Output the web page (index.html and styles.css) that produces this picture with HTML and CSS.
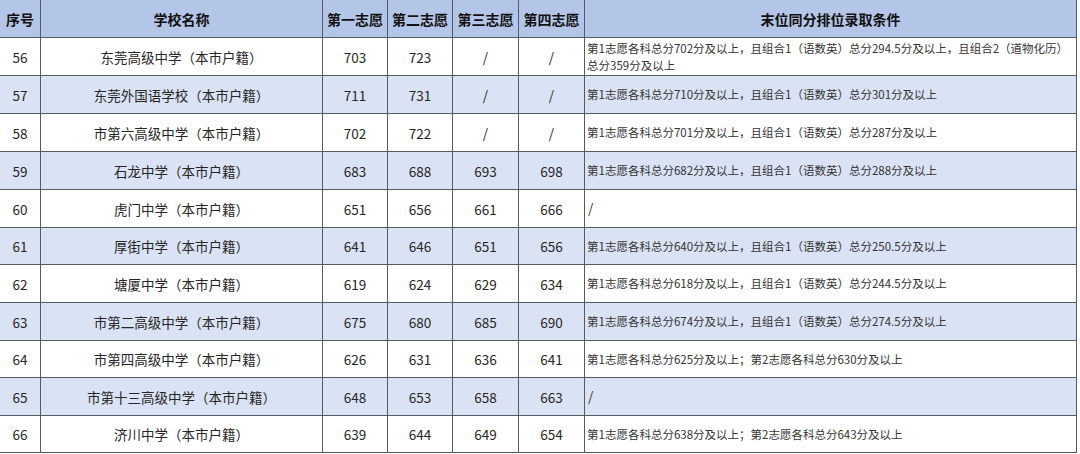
FILE: index.html
```html
<!DOCTYPE html>
<html lang="zh-CN">
<head>
<meta charset="utf-8">
<title>录取分数</title>
<link rel="stylesheet" href="styles.css">
</head>
<body>
<div class="table">
  <div class="row head">
    <div class="c">序号</div><div class="c">学校名称</div><div class="c">第一志愿</div><div class="c">第二志愿</div><div class="c">第三志愿</div><div class="c">第四志愿</div><div class="c">末位同分排位录取条件</div>
  </div>
  <div class="row">
    <div class="c">56</div><div class="c">东莞高级中学（本市户籍）</div><div class="c">703</div><div class="c">723</div><div class="c">/</div><div class="c">/</div><div class="c cond">第1志愿各科总分702分及以上，且组合1（语数英）总分294.5分及以上，且组合2（道物化历）总分359分及以上</div>
  </div>
  <div class="row alt">
    <div class="c">57</div><div class="c">东莞外国语学校（本市户籍）</div><div class="c">711</div><div class="c">731</div><div class="c">/</div><div class="c">/</div><div class="c cond">第1志愿各科总分710分及以上，且组合1（语数英）总分301分及以上</div>
  </div>
  <div class="row">
    <div class="c">58</div><div class="c">市第六高级中学（本市户籍）</div><div class="c">702</div><div class="c">722</div><div class="c">/</div><div class="c">/</div><div class="c cond">第1志愿各科总分701分及以上，且组合1（语数英）总分287分及以上</div>
  </div>
  <div class="row alt">
    <div class="c">59</div><div class="c">石龙中学（本市户籍）</div><div class="c">683</div><div class="c">688</div><div class="c">693</div><div class="c">698</div><div class="c cond">第1志愿各科总分682分及以上，且组合1（语数英）总分288分及以上</div>
  </div>
  <div class="row">
    <div class="c">60</div><div class="c">虎门中学（本市户籍）</div><div class="c">651</div><div class="c">656</div><div class="c">661</div><div class="c">666</div><div class="c cond slash">/</div>
  </div>
  <div class="row alt short">
    <div class="c">61</div><div class="c">厚街中学（本市户籍）</div><div class="c">641</div><div class="c">646</div><div class="c">651</div><div class="c">656</div><div class="c cond">第1志愿各科总分640分及以上，且组合1（语数英）总分250.5分及以上</div>
  </div>
  <div class="row">
    <div class="c">62</div><div class="c">塘厦中学（本市户籍）</div><div class="c">619</div><div class="c">624</div><div class="c">629</div><div class="c">634</div><div class="c cond">第1志愿各科总分618分及以上，且组合1（语数英）总分244.5分及以上</div>
  </div>
  <div class="row alt">
    <div class="c">63</div><div class="c">市第二高级中学（本市户籍）</div><div class="c">675</div><div class="c">680</div><div class="c">685</div><div class="c">690</div><div class="c cond">第1志愿各科总分674分及以上，且组合1（语数英）总分274.5分及以上</div>
  </div>
  <div class="row short">
    <div class="c">64</div><div class="c">市第四高级中学（本市户籍）</div><div class="c">626</div><div class="c">631</div><div class="c">636</div><div class="c">641</div><div class="c cond">第1志愿各科总分625分及以上；第2志愿各科总分630分及以上</div>
  </div>
  <div class="row alt">
    <div class="c">65</div><div class="c">市第十三高级中学（本市户籍）</div><div class="c">648</div><div class="c">653</div><div class="c">658</div><div class="c">663</div><div class="c cond slash">/</div>
  </div>
  <div class="row short">
    <div class="c">66</div><div class="c">济川中学（本市户籍）</div><div class="c">639</div><div class="c">644</div><div class="c">649</div><div class="c">654</div><div class="c cond">第1志愿各科总分638分及以上；第2志愿各科总分643分及以上</div>
  </div>
</div>
</body>
</html>
```

FILE: styles.css
```css
html, body {
  margin: 0;
  padding: 0;
  background: #ffffff;
}

body {
  font-family: "Noto Sans CJK SC", "Noto Sans", sans-serif;
  color: #262626;
  width: 1080px;
  height: 454px;
  overflow: hidden;
}

.table {
  width: 1077px;
}

.row {
  display: grid;
  grid-template-columns: 41px 282px 65px 65px 66px 66px 492px;
  height: 38px;
  background: #ffffff;
}

.row.short {
  height: 37px;
}

.row.alt {
  background: #dae3f3;
}

.row.head {
  background: #b4c6e7;
  height: 38px;
}

.c {
  box-sizing: border-box;
  border-right: 1px solid #555b63;
  border-bottom: 1px solid #555b63;
  display: flex;
  align-items: center;
  justify-content: center;
  font-size: 13.5px;
  line-height: 18px;
  white-space: nowrap;
  overflow: hidden;
}

.head .c {
  font-weight: 700;
  color: #111111;
  font-size: 14px;
}

.c.cond {
  justify-content: flex-start;
  padding-left: 2px;
  padding-right: 8px;
  font-size: 11.5px;
  line-height: 17px;
  white-space: normal;
  color: #333333;
}

.c.slash {
  font-size: 13.5px;
  padding-left: 3px;
}
```
